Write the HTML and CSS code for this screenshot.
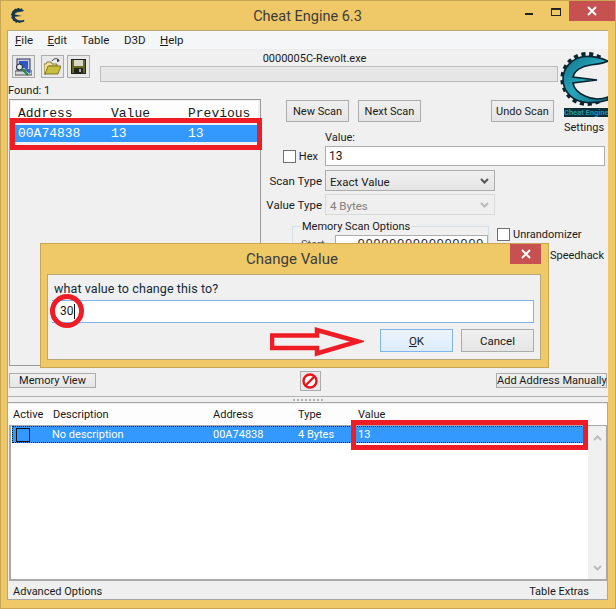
FILE: index.html
```html
<!DOCTYPE html>
<html lang="en">
<head>
<meta charset="utf-8">
<title>Cheat Engine 6.3</title>
<link rel="stylesheet" href="styles.css">
</head>
<body>
<svg class="defs" width="0" height="0" aria-hidden="true">
  <defs>
    <linearGradient id="teal" x1="0" y1="0" x2="1" y2="1">
      <stop offset="0" stop-color="#12708a"/><stop offset=".5" stop-color="#27a7bc"/><stop offset="1" stop-color="#0f6a80"/>
    </linearGradient>
    <symbol id="cog" viewBox="0 0 50 56">
      <path d="M42 7A24.500 24.500 0 1 0 42 49" fill="none" stroke="#0a2530" stroke-width="5" stroke-dasharray="4 3.500"/>
      <path d="M50 10C43 7 35 5 28 5.500C15 6 5 16 5 28C5 41 15 51 29 51.500C36 52 44 51 50 49L50 46C42 49 33 48 27 45C20 42 16 38 15 32L39 29L15 26C16 21 20 18 25 16C32 13 42 14 50 10Z" fill="url(#teal)" stroke="#0a2530" stroke-width="1.600"/>
    </symbol>
    <symbol id="cog-small" viewBox="0 0 50 56">
      <path d="M42 7A24.500 24.500 0 1 0 42 49" fill="none" stroke="#10303f" stroke-width="7" stroke-dasharray="6 5"/>
      <path d="M50 10C42 4 33 3 26 3C12 3 3 13 3 27C3 43 13 53 29 53C36 53 44 53 50 50L50 44C42 48 33 47 24 44C19 41 16 38 15 33L42 30L15 24C16 20 19 18 24 16C32 13 42 16 50 10Z" fill="#123a50"/>
    </symbol>
  </defs>
</svg>

<div class="window">
  <header class="titlebar">
    <svg class="title-icon"><use href="#cog-small"/></svg>
    <span class="title-text">Cheat Engine 6.3</span>
    <div class="win-buttons">
      <span class="win-min"></span>
      <span class="win-max"></span>
      <span class="win-close"><svg width="10" height="10" viewBox="0 0 10 10"><path d="M1 1L9 9M9 1L1 9" stroke="#fff" stroke-width="2"/></svg></span>
    </div>
  </header>

  <main class="client">
    <nav class="menu">
      <span><u>F</u>ile</span><span><u>E</u>dit</span><span>Table</span><span>D3D</span><span><u>H</u>elp</span>
    </nav>

    <section class="upper">
      <div class="tools">
        <div class="tool-row">
          <button class="tool t1">
            <svg width="17" height="18" viewBox="0 0 17 18">
              <rect x="2" y="1" width="13" height="11" fill="#c9ccd6" stroke="#27325c"/>
              <rect x="4" y="3" width="9" height="7" fill="#2f55c8"/>
              <path d="M0 13H17V17H0Z" fill="#d8d8e0" stroke="#555"/>
              <circle cx="4.500" cy="9" r="3" fill="#dfe9f5" stroke="#222"/>
              <path d="M7 11L13 17" stroke="#1a8a3a" stroke-width="2"/>
              <path d="M10 9L15 15" stroke="#2b5fe0" stroke-width="2"/>
            </svg>
          </button>
          <button class="tool t2">
            <svg width="17" height="17" viewBox="0 0 17 17">
              <path d="M8 3C10 0 13 0 15 2" fill="none" stroke="#333" stroke-width="1"/>
              <path d="M13 1L16 3L13 4Z" fill="#333"/>
              <path d="M0 6H2L3 4H7L8 6H13V8H5L2 16H0Z" fill="#f3e29a" stroke="#6b6320" stroke-width=".8"/>
              <path d="M4 8H17L14 16H1Z" fill="#c9bd3d" stroke="#6b6320" stroke-width=".8"/>
            </svg>
          </button>
          <button class="tool t3">
            <svg width="15" height="15" viewBox="0 0 15 15">
              <rect x=".5" y=".5" width="14" height="14" fill="#666a1e" stroke="#222"/>
              <rect x="3" y="1" width="9" height="6" fill="#d7d7c8"/>
              <rect x="3" y="9" width="9" height="5" fill="#22261a"/>
              <rect x="8" y="10" width="2" height="3" fill="#aaa"/>
            </svg>
          </button>
        </div>
        <div class="found">Found: 1</div>
      </div>

      <div class="process">
        <div class="process-name">0000005C-Revolt.exe</div>
        <div class="progress"></div>
      </div>

      <div class="logo">
        <svg class="logo-mark"><use href="#cog"/></svg>
        <div class="logo-word">Cheat Engine</div>
        <div class="logo-label">Settings</div>
      </div>

      <div class="results">
        <div class="results-head"><span class="c-addr">Address</span><span class="c-val">Value</span><span class="c-prev">Previous</span></div>
        <div class="results-row"><span class="c-addr">00A74838</span><span class="c-val">13</span><span class="c-prev">13</span></div>
      </div>

      <div class="scan">
        <div class="scan-buttons">
          <button class="btn scan-btn">New Scan</button>
          <button class="btn scan-btn">Next Scan</button>
          <button class="btn scan-btn undo">Undo Scan</button>
        </div>
        <div class="value-label">Value:</div>
        <div class="form-row">
          <label class="form-key hex"><span class="check"></span>Hex</label>
          <div class="field wide">13</div>
        </div>
        <div class="form-row r-scan">
          <span class="form-key">Scan Type</span>
          <div class="select">Exact Value<svg class="chev" width="9" height="6" viewBox="0 0 9 6"><path d="M1 1L4.500 4.500L8 1" fill="none" stroke="#555" stroke-width="2"/></svg></div>
        </div>
        <div class="form-row r-value">
          <span class="form-key">Value Type</span>
          <div class="select disabled">4 Bytes<svg class="chev" width="9" height="6" viewBox="0 0 9 6"><path d="M1 1L4.500 4.500L8 1" fill="none" stroke="#bbb" stroke-width="2"/></svg></div>
        </div>
        <div class="mem-row">
          <fieldset class="mem">
            <legend>Memory Scan Options</legend>
            <div class="mem-line"><span class="mem-key">Start</span><div class="mem-input">0000000000000000</div></div>
          </fieldset>
          <div class="side">
            <label class="side-check"><span class="check"></span>Unrandomizer</label>
            <label class="side-check speed"><span class="check"></span>Speedhack</label>
          </div>
        </div>
      </div>
    </section>

    <section class="actions">
      <button class="btn small mem-view">Memory View</button>
      <button class="stop">
        <svg width="16" height="16" viewBox="0 0 16 16"><circle cx="8" cy="8" r="6.500" fill="#fff" stroke="#e8141c" stroke-width="2.400"/><path d="M3.500 12.500L12.500 3.500" stroke="#e8141c" stroke-width="2.400"/></svg>
      </button>
      <button class="btn small add-addr">Add Address Manually</button>
    </section>

    <div class="splitter"><span class="grip"></span></div>

    <section class="table">
      <div class="table-head">
        <span class="col-active">Active</span><span class="col-desc">Description</span><span class="col-addr">Address</span><span class="col-type">Type</span><span class="col-value">Value</span>
      </div>
      <div class="table-body">
        <div class="table-list">
          <div class="table-row">
            <span class="col-active"><span class="row-check"></span></span><span class="col-desc">No description</span><span class="col-addr">00A74838</span><span class="col-type">4 Bytes</span><span class="col-value">13</span>
          </div>
        </div>
        <div class="scrollbar">
          <svg width="9" height="6" viewBox="0 0 9 6"><path d="M1 5L4.500 1.500L8 5" fill="none" stroke="#bdbdbd" stroke-width="2"/></svg>
          <svg width="9" height="6" viewBox="0 0 9 6"><path d="M1 1L4.500 4.500L8 1" fill="none" stroke="#bdbdbd" stroke-width="2"/></svg>
        </div>
      </div>
      <footer class="status"><span>Advanced Options</span><span>Table Extras</span></footer>
    </section>
  </main>

  <div class="mark mark-results"></div>
  <div class="mark mark-value"></div>

  <div class="dialog">
    <div class="dialog-title">
      <span>Change Value</span>
      <span class="dialog-close"><svg width="10" height="10" viewBox="0 0 10 10"><path d="M1 1L9 9M9 1L1 9" stroke="#fff" stroke-width="2"/></svg></span>
    </div>
    <div class="dialog-body">
      <div class="dialog-label">what value to change this to?</div>
      <div class="dialog-input">30<span class="caret"></span></div>
      <div class="dialog-buttons">
        <button class="btn dlg-btn ok"><span><u>O</u>K</span></button>
        <button class="btn dlg-btn">Cancel</button>
      </div>
    </div>
  </div>

  <svg class="mark-arrow" width="94" height="30" viewBox="0 0 94 30">
    <path d="M2 8.500H47V3L88 14.500L47 26.500V21H2Z" fill="none" stroke="#ee1c25" stroke-width="4.500"/>
  </svg>
  <div class="mark-circle"></div>
</div>
</body>
</html>
```
FILE: styles.css
```css
* { box-sizing: border-box; }
html, body { margin: 0; padding: 0; }
body { width: 616px; height: 609px; overflow: hidden; font-family: Roboto, "Open Sans", sans-serif; font-size: 11px; color: #1a1a1a; }
button { font: inherit; color: inherit; padding: 0; margin: 0; }
.defs { position: absolute; }

.window { position: relative; width: 616px; height: 609px; background: #efc868; border: 1px solid #c8a654; display: flex; flex-direction: column; padding: 0 7px 8px 6px; }

.titlebar { height: 29px; flex: none; display: flex; align-items: center; justify-content: center; position: relative; }
.title-icon { position: absolute; left: 3px; top: 7px; width: 15px; height: 15px; }
.title-text { font-size: 14.500px; color: #3c3c3c; margin-top: 1px; }
.win-buttons { position: absolute; right: -7px; top: 0; height: 20px; display: flex; }
.win-min { width: 8px; height: 2px; background: #222; margin: 12px 18px 0 0; }
.win-max { width: 10px; height: 8px; border: 1px solid #222; border-top-width: 2px; margin: 7px 8px 0 0; }
.win-close { width: 46px; height: 20px; background: #c75050; display: flex; align-items: center; justify-content: center; }

.client { flex: 1; min-height: 0; background: #f0f0f0; border: 1px solid #b8a878; border-right: 0; border-bottom: 0; display: flex; flex-direction: column; }

.menu { height: 19px; flex: none; background: #f5f6f7; border-bottom: 1px solid #ececec; display: flex; align-items: center; padding-left: 7px; gap: 14.500px; font-size: 11.500px; }

.upper { height: 316px; flex: none; display: grid; grid-template-columns: 92px 162px 296px 50px; grid-template-rows: 49px 267px; }

.tools { grid-column: 1; grid-row: 1; padding: 5px 0 0 4px; }
.tool-row { display: flex; }
.tool { width: 23px; height: 23px; background: #e9e9e9; border: 1px solid #acacac; display: flex; align-items: center; justify-content: center; }
.t2 { margin-left: 6px; }
.t3 { margin-left: 3px; }
.found { margin: 5px 0 0 -4px; line-height: 15px; white-space: nowrap; }

.process { grid-column: 2 / 4; grid-row: 1; padding-top: 1px; }
.process-name { text-align: center; line-height: 15px; height: 15px; padding-right: 29px; }
.progress { height: 16px; background: #e6e6e6; border: 1px solid #bcbcbc; }

.logo { grid-column: 4; grid-row: 1 / 3; z-index: 1; overflow: hidden; height: 92px; padding-top: 1px; }
.logo-mark { display: block; width: 50px; height: 56px; }
.logo-word { margin: 1px 0 0 6px; width: 44px; height: 9px; background: #0b2e38; color: #1f96ad; font-size: 7.500px; font-weight: 700; line-height: 9px; white-space: nowrap; overflow: hidden; }
.logo-label { margin: 4px 0 0 6px; line-height: 14px; }

.results { grid-column: 1 / 3; grid-row: 2; margin-left: 1px; margin-right: 1px; border: 1px solid #9a9a9a; font-family: "Liberation Mono", monospace; font-size: 13px; }
.results-head { height: 20px; background: #fdfdfd; display: flex; align-items: flex-end; padding-left: 7px; margin: 1px 2px 0 1px; }
.results-row { height: 17px; margin: 4px 2px 0 1px; background: #3399ff; color: #fff; display: flex; align-items: center; padding-left: 7px; }
.results-head .c-addr { width: 93px; }
.results-row .c-addr { width: 93px; }
.c-val { width: 77px; }

.scan { grid-column: 3 / 5; grid-row: 2; }
.btn { background: linear-gradient(#f0f0f0, #e5e5e5); border: 1px solid #acacac; }
.scan-buttons { display: flex; height: 23px; padding: 1px 0 0 24px; }
.scan-btn { width: 63px; height: 22px; margin-right: 9px; }
.undo { margin-left: 61px; margin-right: 0; }
.value-label { margin: 8px 0 0 63px; height: 16px; line-height: 15px; }
.form-row { display: flex; align-items: center; }
.form-key { width: 63px; flex: none; text-align: right; padding-right: 3px; white-space: nowrap; font-size: 11.500px; }
.hex { display: flex; justify-content: flex-end; align-items: center; gap: 3px; padding-right: 7px; margin-left: -7px; width: 70px; font-size: 11px; }
.check { display: block; width: 13px; height: 13px; background: #fff; border: 1px solid #707070; flex: none; }
.field { height: 20px; background: #fff; border: 1px solid #acacac; padding: 0 3px; line-height: 18px; font-size: 12px; }
.wide { width: 280px; }
.select { position: relative; width: 170px; height: 21px; border: 1px solid #acacac; background: linear-gradient(#f0f0f0, #e5e5e5); padding: 1px 0 0 4px; line-height: 20px; font-size: 11.500px; }
.select.disabled { background: #efefef; border-color: #d9d9d9; color: #808080; }
.chev { position: absolute; right: 5px; top: 7px; }
.r-scan { margin-top: 4px; }
.r-value { margin-top: 3px; }
.mem-row { display: flex; margin-top: 4px; }
.mem { width: 197px; height: 60px; margin: 0 0 0 30px; padding: 0; border: 1px solid #d5dfe5; min-width: 0; }
.mem legend { padding: 0 1px; margin-left: 8px; line-height: 15px; }
.mem-line { display: flex; padding-top: 1px; }
.mem-key { width: 42px; padding: 3px 0 0 8px; color: #555; }
.mem-input { flex: 1; height: 24px; background: #fff; border: 1px solid #acacac; font-size: 13px; text-align: right; padding-right: 3px; letter-spacing: .6px; color: #333; overflow: hidden; }
.side { padding: 9px 0 0 8px; width: 110px; }
.side-check { display: flex; align-items: center; gap: 3px; height: 13px; white-space: nowrap; }
.speed { margin: 8px 0 0 37px; }

.actions { height: 30px; flex: none; position: relative; display: flex; align-items: center; padding: 0 1px 1px 1px; justify-content: space-between; }
.small { height: 15px; line-height: 13px; }
.mem-view { width: 87px; }
.add-addr { width: 111px; white-space: nowrap; }
.stop { width: 21px; height: 20px; background: #e9e9e9; border: 1px solid #acacac; display: flex; align-items: center; justify-content: center; margin-left: 28px; }

.splitter { height: 7px; flex: none; border-top: 1px solid #b4b4b4; border-bottom: 1px solid #a5a5a5; background: #f0f0f0; position: relative; display: flex; justify-content: center; align-items: center; }
.grip { width: 30px; height: 2px; background: repeating-linear-gradient(90deg, #b0b0b0 0 2px, transparent 2px 4px); }

.table { flex: 1; min-height: 0; display: flex; flex-direction: column; border-right: 1px solid #a8a8a8; border-bottom: 1px solid #a8a8a8; }
.table-head { height: 21px; flex: none; background: #fdfdfd; margin-top: 1px; display: flex; align-items: center; }
.col-active { width: 45px; padding-left: 5px; flex: none; }
.col-desc { width: 160px; flex: none; }
.col-addr { width: 85px; flex: none; }
.col-type { width: 60px; flex: none; }
.col-value { flex: 1; }
.table-body { flex: 1; min-height: 0; display: flex; background: #fff; border: 1px solid #a8a8a8; border-width: 1px 1px 2px 2px; margin-left: 1px; }
.table-list { flex: 1; }
.table-row { height: 17px; margin-left: 1px; background: #3399ff; color: #fff; display: flex; align-items: center; outline: 1px dotted #1a1200; outline-offset: -1px; }
.table-row .col-active { width: 40px; padding-left: 4px; }
.table-row .col-desc { width: 161px; }
.row-check { display: block; width: 14px; height: 14px; border: 1px solid #111; }
.scrollbar { width: 18px; flex: none; background: #f0f0f0; display: flex; flex-direction: column; align-items: center; justify-content: space-between; padding: 9px 0 8px; }
.status { height: 18px; flex: none; display: flex; justify-content: space-between; align-items: center; padding: 2px 18px 0 5px; background: #efefef; }

.mark { position: absolute; border: 5px solid #ee1c25; pointer-events: none; }
.mark-results { left: 9px; top: 117px; width: 252px; height: 32px; }
.mark-value { left: 350px; top: 419px; width: 237px; height: 30px; }

.dialog { position: absolute; left: 39px; top: 242px; width: 509px; height: 125px; background: #efc868; border: 1px solid #c8a654; display: flex; flex-direction: column; padding: 0 7px 7px 6px; z-index: 2; }
.dialog-title { height: 30px; flex: none; display: flex; justify-content: center; align-items: center; font-size: 15px; color: #3c3c3c; position: relative; padding-right: 4px; }
.dialog-close { position: absolute; right: 0; top: 0; width: 31px; height: 20px; background: #c75050; display: flex; align-items: center; justify-content: center; }
.dialog-body { flex: 1; background: #f0f0f0; border: 1px solid #b8a878; padding: 6px 6px 0; font-size: 12.500px; }
.dialog-label { height: 19px; line-height: 16px; letter-spacing: .1px; color: #0f2a3a; }
.dialog-input { height: 23px; margin-left: -2px; background: #fff; border: 1px solid #7eb4ea; border-left: 0; width: 482px; line-height: 21px; padding-left: 8px; display: flex; align-items: center; font-size: 12px; }
.caret { width: 1px; height: 15px; background: #111; }
.dialog-buttons { display: flex; justify-content: flex-end; gap: 8px; margin-top: 6px; }
.dlg-btn { width: 73px; height: 23px; font-size: 11.500px; }
.ok { background: linear-gradient(#ecf4fc, #dcecfc); border-color: #7eb4ea; }

.mark-arrow { position: absolute; left: 269px; top: 326px; z-index: 3; }
.mark-circle { position: absolute; left: 49px; top: 293px; width: 34px; height: 34px; border: 5px solid #ee1c25; border-radius: 50%; z-index: 3; }
```
